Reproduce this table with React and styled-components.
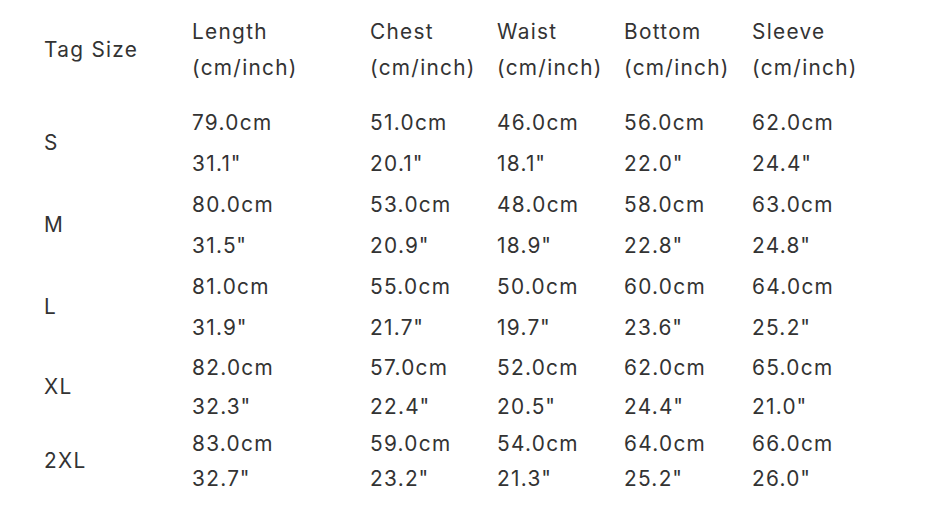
import React from "react";
import styled, { createGlobalStyle } from "styled-components";

const GlobalStyle = createGlobalStyle`
  html, body { margin: 0; padding: 0; background: #ffffff; }
  body {
    font-family: Inter, "Liberation Sans", sans-serif;
    color: #333333;
  }
`;

const COLUMNS = "148px 178px 127px 127px 128px 1fr";

const Page = styled.div`
  padding: 13.5px 0 0 44px;
  font-size: 20.8px;
  letter-spacing: 1.3px;
  font-weight: 400;
`;

const HeaderRow = styled.div`
  display: grid;
  grid-template-columns: ${COLUMNS};
  line-height: 36px;
  margin-bottom: 16px;
`;

const HeadCell = styled.div`
  display: flex;
  flex-direction: column;
  justify-content: center;
  white-space: nowrap;
`;

const Row = styled.div`
  display: grid;
  grid-template-columns: ${COLUMNS};
  line-height: ${(p) => p.$lh}px;
`;

const SizeCell = styled.div`
  display: flex;
  align-items: center;
`;

const ValueCell = styled.div`
  display: flex;
  flex-direction: column;
  white-space: nowrap;
`;

const Line = styled.span`
  display: block;
`;

const Inch = styled.span`
  letter-spacing: 0;
  margin-left: -0.5px;
`;

const headers = ["Length", "Chest", "Waist", "Bottom", "Sleeve"];

const rows = [
  { size: "S", lh: 41, values: [["79.0", "31.1"], ["51.0", "20.1"], ["46.0", "18.1"], ["56.0", "22.0"], ["62.0", "24.4"]] },
  { size: "M", lh: 41, values: [["80.0", "31.5"], ["53.0", "20.9"], ["48.0", "18.9"], ["58.0", "22.8"], ["63.0", "24.8"]] },
  { size: "L", lh: 41, values: [["81.0", "31.9"], ["55.0", "21.7"], ["50.0", "19.7"], ["60.0", "23.6"], ["64.0", "25.2"]] },
  { size: "XL", lh: 39, values: [["82.0", "32.3"], ["57.0", "22.4"], ["52.0", "20.5"], ["62.0", "24.4"], ["65.0", "21.0"]] },
  { size: "2XL", lh: 35, values: [["83.0", "32.7"], ["59.0", "23.2"], ["54.0", "21.3"], ["64.0", "25.2"], ["66.0", "26.0"]] },
];

export default function App() {
  return (
    <>
      <GlobalStyle />
      <Page>
        <HeaderRow>
          <HeadCell>Tag Size</HeadCell>
          {headers.map((h) => (
            <HeadCell key={h}>
              <Line>{h}</Line>
              <Line>(cm/inch)</Line>
            </HeadCell>
          ))}
          <HeadCell />
        </HeaderRow>
        {rows.map((r) => (
          <Row key={r.size} $lh={r.lh}>
            <SizeCell>{r.size}</SizeCell>
            {r.values.map(([cm, inch], i) => (
              <ValueCell key={i}>
                <Line>{cm}cm</Line>
                <Line>
                  {inch}
                  <Inch>"</Inch>
                </Line>
              </ValueCell>
            ))}
            <ValueCell />
          </Row>
        ))}
      </Page>
    </>
  );
}
